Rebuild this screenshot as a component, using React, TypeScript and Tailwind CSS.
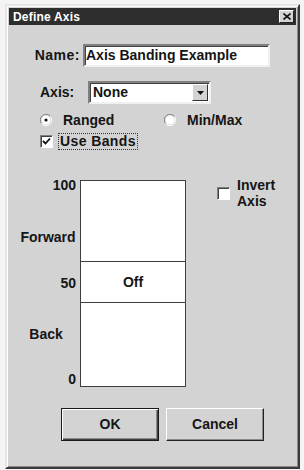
import React from "react";

const font = { fontFamily: '"Liberation Sans", Arial, sans-serif' };

function Radio({ checked }: { checked?: boolean }) {
  return (
    <svg width="12" height="12" viewBox="0 0 12 12">
      <path d="M10.5 2.5 A5.5 5.5 0 0 0 1.5 9.5" fill="none" stroke="#808080" strokeWidth="1" />
      <path d="M1.5 9.5 A5.5 5.5 0 0 0 10.5 2.5" fill="none" stroke="#ffffff" strokeWidth="1" />
      <circle cx="6" cy="6" r="4.5" fill="#ffffff" />
      {checked && <circle cx="6" cy="6" r="1.6" fill="#111" />}
    </svg>
  );
}

function CheckBox({ checked }: { checked?: boolean }) {
  return (
    <div className="w-[13px] h-[13px] bg-white border border-t-[#808080] border-l-[#808080] border-b-white border-r-white shadow-[inset_1px_1px_0_#404040] flex items-center justify-center">
      {checked && (
        <svg width="9" height="9" viewBox="0 0 9 9">
          <path d="M1 4 L3.5 6.5 L8 1.5" fill="none" stroke="#111" strokeWidth="1.8" />
        </svg>
      )}
    </div>
  );
}

export default function App() {
  return (
    <div className="w-[304px] h-[470px] bg-[#f4f4f4] pt-[4px] pl-[5px]" style={font}>
      {/* WINDOW */}
      <div className="w-[295px] h-[465px] bg-[#d3d3d3] border-2 border-t-[#e6e6e6] border-l-[#e6e6e6] border-b-[#3a3a3a] border-r-[#3a3a3a] shadow-[inset_1px_1px_0_#ffffff,inset_-1px_-1px_0_#8a8a8a] text-[#151515]">
        {/* TITLE BAR */}
        <div className="mx-[2px] mt-[2px] h-[17px] bg-[#2e2e2e] flex items-center justify-between pl-[4px] pr-[2px]">
          <span className="text-white text-[12px] font-bold leading-none tracking-[0.2px]">Define Axis</span>
          <div className="w-[15px] h-[13px] bg-[#d3d3d3] border border-t-white border-l-white border-b-[#222] border-r-[#222] flex items-center justify-center">
            <svg width="8" height="7" viewBox="0 0 8 7">
              <path d="M0.5 0.5 L7.5 6.5 M7.5 0.5 L0.5 6.5" stroke="#111" strokeWidth="1.6" />
            </svg>
          </div>
        </div>

        {/* NAME */}
        <div className="flex items-center mt-[19px]">
          <div className="w-[73px] text-right text-[14px] font-bold tracking-[0.5px]">Name:</div>
          <div className="ml-[3px] w-[187px] h-[23px] bg-white border-2 border-t-[#808080] border-l-[#808080] border-b-[#f0f0f0] border-r-[#f0f0f0] shadow-[inset_1px_1px_0_#404040] flex items-center pl-[1px] text-[14px] font-bold">
            Axis Banding Example
          </div>
        </div>

        {/* AXIS */}
        <div className="flex items-center mt-[14px] ml-[33px]">
          <div className="w-[48px] text-[14px] font-bold">Axis:</div>
          <div className="w-[123px] h-[23px] bg-white border-2 border-t-[#808080] border-l-[#808080] border-b-[#f0f0f0] border-r-[#f0f0f0] shadow-[inset_1px_1px_0_#404040] flex items-center justify-between pl-[3px] pr-[1px] text-[14px] font-bold">
            <span>None</span>
            <div className="w-[16px] h-[17px] bg-[#d3d3d3] border border-t-white border-l-white border-b-[#303030] border-r-[#303030] flex items-center justify-center">
              <svg width="7" height="4" viewBox="0 0 7 4">
                <path d="M0 0 H7 L3.5 4 Z" fill="#111" />
              </svg>
            </div>
          </div>
        </div>

        {/* RADIOS */}
        <div className="flex items-center h-[16px] mt-[8px] ml-[33px] text-[14px] font-bold">
          <Radio checked />
          <span className="ml-[11px] w-[101px]">Ranged</span>
          <Radio />
          <span className="ml-[11px]">Min/Max</span>
        </div>

        {/* USE BANDS */}
        <div className="flex items-center h-[16px] mt-[5px] ml-[33px] text-[14px] font-bold">
          <CheckBox checked />
          <span className="ml-[5px] px-[1px] leading-[15px] border border-dotted border-[#333] tracking-[0.4px]">Use Bands</span>
        </div>

        {/* BANDS */}
        <div className="flex mt-[29px]">
          <div className="w-[64px] ml-[5px] flex flex-col text-[14px] font-bold leading-[14px]">
            <div className="text-right">100</div>
            <div className="mt-[38px] text-center pl-[8px]">Forward</div>
            <div className="mt-[32px] text-right">50</div>
            <div className="mt-[37px] text-center pl-[4px]">Back</div>
            <div className="mt-[31px] text-right">0</div>
          </div>
          <div className="ml-[4px] mt-[2px] w-[106px] h-[207px] bg-white border border-[#3e3e3e] flex flex-col">
            <div className="h-[81px] border-b border-[#3e3e3e]" />
            <div className="h-[41px] border-b border-[#3e3e3e] flex items-center justify-center text-[14px] font-bold">Off</div>
            <div className="flex-1" />
          </div>
          <div className="ml-[31px] mt-[9px] flex">
            <CheckBox />
            <div className="ml-[7px] -mt-[10px] text-[14px] font-bold leading-[16px]">
              <div>Invert</div>
              <div>Axis</div>
            </div>
          </div>
        </div>

        {/* BUTTONS */}
        <div className="flex mt-[21px] ml-[54px] gap-[7px] text-[14px] font-bold">
          <button className="w-[98px] h-[33px] bg-[#d3d3d3] border border-[#1a1a1a] shadow-[inset_1px_1px_0_#ffffff,inset_-1px_-1px_0_#404040,inset_-2px_-2px_0_#8a8a8a]">
            OK
          </button>
          <button className="w-[98px] h-[33px] bg-[#d3d3d3] border border-t-white border-l-white border-b-[#222] border-r-[#222] shadow-[inset_-1px_-1px_0_#8a8a8a]">
            Cancel
          </button>
        </div>
      </div>
    </div>
  );
}
